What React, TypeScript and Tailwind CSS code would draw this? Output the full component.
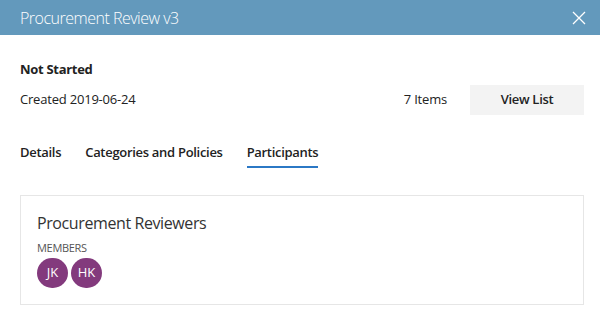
import React from "react";

export default function App() {
  const font = { fontFamily: '"Segoe UI", "Open Sans", "Noto Sans", sans-serif' };
  return (
    <div className="w-[600px] h-[313px] bg-white overflow-hidden" style={font}>
      <div className="h-[35px] bg-[#6399bc] flex items-center justify-between pl-5 pr-[14px]">
        <span className="text-[16px] text-white font-light tracking-[-0.5px]">Procurement Review v3</span>
        <svg width="14" height="14" viewBox="0 0 14 14" className="text-white">
          <path d="M1 1L13 13M13 1L1 13" stroke="currentColor" strokeWidth="1.3" fill="none" />
        </svg>
      </div>
      <div className="pl-5 pr-4">
        <div className="pt-[26px] text-[13px] font-bold text-[#222] leading-[16px] tracking-[-0.3px]">Not Started</div>
        <div className="mt-[8px] flex items-center justify-between">
          <span className="text-[13px] text-[#222] tracking-[-0.2px]">Created 2019-06-24</span>
          <div className="flex items-center">
            <span className="text-[13px] text-[#222] mr-[23px] tracking-[-0.2px]">7 Items</span>
            <button className="w-[114px] h-[30px] bg-[#f3f3f3] text-[13px] font-semibold text-[#222] tracking-[-0.3px]">View List</button>
          </div>
        </div>
        <div className="mt-[28px] flex gap-[24px] text-[13px] font-semibold text-[#222] tracking-[-0.3px]">
          <span className="pb-[5px]">Details</span>
          <span className="pb-[5px]">Categories and Policies</span>
          <span className="pb-[3px] border-b-2 border-[#2b78c5]">Participants</span>
        </div>
        <div className="mt-[27px] border border-[#e6e6e6] h-[110px] px-4 pt-[16px]">
          <div className="text-[16px] text-[#333] leading-[22px] tracking-[-0.4px]">Procurement Reviewers</div>
          <div className="mt-[7px] text-[11px] text-[#555] leading-[14px] tracking-[-0.3px]">MEMBERS</div>
          <div className="mt-[3px] flex gap-[3px]">
            <div className="w-[31px] h-[30px] rounded-full bg-[#833a7d] text-white text-[13px] flex items-center justify-center">JK</div>
            <div className="w-[31px] h-[30px] rounded-full bg-[#833a7d] text-white text-[13px] flex items-center justify-center">HK</div>
          </div>
        </div>
      </div>
    </div>
  );
}
